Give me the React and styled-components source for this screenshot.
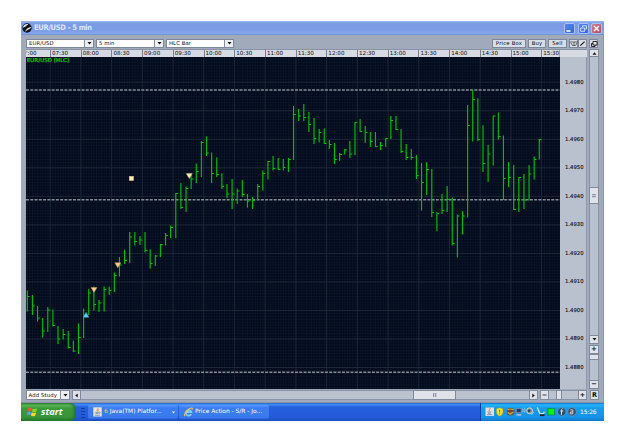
import React from "react";
import styled, { createGlobalStyle } from "styled-components";

const FIRST_BAR_X = 27.3;
const BAR_STEP = 5.12;

// [high, low, close] for each 5 minute bar, in chart units
const BARS = [
  [290.5, 311.5, 296.5], [295, 315, 306], [306, 321.5, 318], [318, 337.5, 331],
  [307, 332, 310], [309.5, 326.5, 325.5], [326, 344, 339], [329, 339.5, 334.5],
  [331, 348.5, 347.5], [340.5, 352, 351], [323.5, 354, 337.5], [308.5, 338, 315],
  [289, 315, 293], [286.5, 310.5, 304.5], [300, 312, 303], [286.5, 311.5, 289.5],
  [286.5, 295, 290.5], [272.5, 292, 275.5], [257, 276.5, 265], [249.5, 264, 260.5],
  [232, 263, 237], [232, 245.5, 241.5], [236, 245, 240], [232, 252.5, 250.5],
  [249.5, 268.5, 263.5], [255, 266, 256], [244, 257, 244.5], [233, 245.5, 235.5],
  [225.5, 238, 227.5], [193, 238, 193.5], [183, 209, 207.5], [186.5, 212, 188.5],
  [175, 189, 179], [163.5, 183, 171.5], [141, 177, 142.5], [136.5, 156, 153],
  [152.5, 183, 173.5], [157.5, 177, 174.5], [173.5, 189, 186.5], [184, 198, 194],
  [179, 209, 194], [188.5, 204, 191], [180, 197, 194.5], [194, 207.5, 201],
  [197, 209, 200.5], [184, 200, 186.5], [170.5, 190.5, 173.5], [161, 179.5, 161.5],
  [156, 170.5, 168.5], [158, 170, 169.5], [159, 170.5, 167.5], [158, 172, 159.5],
  [106, 160, 114.5], [109, 121, 116], [104, 121, 117.5], [112, 132, 124.5],
  [118, 144, 138.5], [129, 142.5, 132.5], [128.5, 144, 143.5], [140, 149, 144.5],
  [143, 164, 159.5], [153, 161, 154.5], [149, 154.5, 150], [141, 158, 154],
  [122, 155, 122.5], [119, 132, 131.5], [126, 143, 132.5], [132, 147, 141.5],
  [132, 147, 146.5], [142, 150, 145.5], [138, 147, 138.5], [116, 139, 120.5],
  [116, 130, 129.5], [129, 153, 151.5], [144, 160, 157.5], [149, 160, 157.5],
  [155, 179, 175.5], [163, 210.5, 182.5], [162, 195, 169.5], [169, 217, 212.5],
  [212, 231, 213.5], [194, 214, 210.5], [186, 212, 199.5], [197.5, 245.5, 243.5],
  [214.5, 257.5, 216], [211, 234.5, 216], [105, 217.5, 125.5], [90, 141.5, 99.5],
  [98.5, 141, 139.5], [125.5, 172, 163.5], [145, 182, 154], [115.5, 165.5, 116],
  [112.5, 139.5, 136.5], [135.5, 200, 178.5], [162, 187, 177.5], [165, 210, 209.5],
  [177, 212, 177.5], [174, 209, 200], [165, 200.5, 174], [156.5, 179.5, 159.5],
  [139, 159.5, 139.5],
];

const TIMES = [
  "07:30", "08:00", "08:30", "09:00", "09:30", "10:00", "10:30", "11:00", "11:30",
  "12:00", "12:30", "13:00", "13:30", "14:00", "14:30", "15:00", "15:30",
];

const PRICES = [
  "1.4980", "1.4970", "1.4960", "1.4950", "1.4940", "1.4930",
  "1.4920", "1.4910", "1.4900", "1.4890", "1.4880",
];

const LEVELS = [90, 199.8, 372.3];

const Chart = () => (
  <ChartSvg viewBox="26 57 534 332">
    <defs>
      <pattern id="minor" x="50" y="82" width="2.56" height="2.853" patternUnits="userSpaceOnUse">
        <path d="M0 0.5H2.56M0.5 0V2.853" stroke="#0a1628" strokeWidth="0.8" />
      </pattern>
    </defs>
    <rect x="26" y="57" width="534" height="332" fill="#010819" />
    <rect x="26" y="57" width="534" height="332" fill="url(#minor)" />
    {TIMES.map((time, i) => (
      <line key={time} x1={50.2 + i * 30.71} x2={50.2 + i * 30.71} y1="57" y2="389" stroke="#1c2737" />
    ))}
    {PRICES.map((price, i) => (
      <line key={price} x1="26" x2="560" y1={82.2 + i * 28.53} y2={82.2 + i * 28.53} stroke="#1c2737" />
    ))}
    {LEVELS.map((y) => (
      <line key={y} x1="26" x2="560" y1={y} y2={y} stroke="#868c95" strokeWidth="1.5" strokeDasharray="3 1.27" />
    ))}
    {BARS.map(([high, low, close], i) => {
      const x = FIRST_BAR_X + i * BAR_STEP;
      return (
        <path
          key={i}
          d={`M${x} ${high}V${low}M${x} ${close}h2.3`}
          stroke="#00c008"
          strokeWidth="1.15"
          fill="none"
        />
      );
    })}
    <path d="M91 287.6h6l-3 5z" fill="#ffd08a" stroke="#c88f60" strokeWidth="0.5" />
    <path d="M114.8 262.8h6l-3 5z" fill="#ffd08a" stroke="#c88f60" strokeWidth="0.5" />
    <path d="M186.3 173.6h6l-3 5z" fill="#fff0a8" stroke="#c8b890" strokeWidth="0.5" />
    <path d="M83.4 317.3h5.4l-2.7-5z" fill="#62d0ff" stroke="#4a9ac0" strokeWidth="0.5" />
    <rect x="129.3" y="176.4" width="4.2" height="4" fill="#ffefa8" stroke="#d8cda0" strokeWidth="0.6" />
    <ChartLabel x="26.8" y="61.6" textLength="42.5">
      EUR/USD (HLC)
    </ChartLabel>
  </ChartSvg>
);

const Arrow = ({ d = "M0.5 1h4L2.5 3.5z" }) => (
  <svg width="5" height="5" viewBox="0 0 5 5">
    <path d={d} fill="#111" />
  </svg>
);

const UP = "M0.5 3.7h4L2.5 1.2z";
const LEFT = "M3.7 0.5v4L1.2 2.5z";
const RIGHT = "M1.3 0.5v4L3.8 2.5z";

const Dropdown = ({ width, children }) => (
  <Select $width={width}>
    <SelectValue>{children}</SelectValue>
    <SelectArrow>
      <Arrow />
    </SelectArrow>
  </Select>
);

const JavaIcon = () => (
  <svg width="9" height="10" viewBox="0 0 9 10">
    <rect x="0.3" y="0.3" width="8.4" height="9.2" fill="#e9e4df" />
    <path d="M4.7 1.2c1 1-1.6 1.7-.3 3.2M5.7 2.6c-.9.6-.9 1 0 1.8" stroke="#e26a32" strokeWidth="0.8" fill="none" />
    <path d="M2.2 5.3h3.7M2.6 6.5h3M1.7 7.9c1.5.8 4 .7 5.3 0M6.4 5.2c1.2-.2 1 1.1-.3 1.4" stroke="#5378a5" strokeWidth="0.7" fill="none" />
  </svg>
);

const IeIcon = () => (
  <svg width="9" height="10" viewBox="0 0 9 10">
    <path d="M7.2 7.1A2.8 2.8 0 1 1 7.4 5.2H2.4" fill="none" stroke="#7cd2ff" strokeWidth="1.7" />
    <path d="M1.2 9C-.6 8.5 1.6 4 5 2c2.5-1.5 4-1.2 3.2.6" fill="none" stroke="#f4c83a" strokeWidth="1.1" />
  </svg>
);

const TrayIcons = () => (
  <svg width="92" height="12" viewBox="0 0 92 12">
    {/* java */}
    <rect x="0.5" y="1.5" width="8.5" height="8.5" fill="#e4e1dd" />
    <path d="M4.9 2c1 1-1.6 1.7-.3 3.2" stroke="#e26a32" strokeWidth="0.9" fill="none" />
    <path d="M2.5 6h3.8M3 7.2h2.7M2 8.7h5.3" stroke="#5378a5" strokeWidth="0.7" />
    {/* security shield */}
    <path d="M14.7 1.7l3.3 1v3.2c0 2-1.3 3.3-3.3 4.3-2-1-3.3-2.3-3.3-4.3V2.7z" fill="#f8e22e" stroke="#9b8c22" strokeWidth="0.5" />
    <path d="M14.7 3.8v2.7M14.7 7.3v1" stroke="#6d6420" strokeWidth="0.9" />
    {/* globe */}
    <circle cx="25.6" cy="5.8" r="3.8" fill="#6d4a2b" />
    <path d="M22.5 4c2-2 4.5-.8 6.2 0M22.6 6.6c2 1.4 4 .9 6-.6" stroke="#e6a137" strokeWidth="1.2" fill="none" />
    <path d="M24 8.5l3 .4" stroke="#57a05b" />
    {/* network monitor */}
    <rect x="31.3" y="2.7" width="4.8" height="4" fill="#263866" stroke="#8290b2" strokeWidth="0.7" />
    <path d="M31.5 8.9h4.7" stroke="#c4ccdc" strokeWidth="1.3" />
    <path d="M37.5 2.5q1.3 1.7 0 3.7M39.3 1.7q1.8 2.5 0 5" stroke="#c9dcf2" strokeWidth="0.7" fill="none" />
    {/* volume */}
    <circle cx="44.6" cy="4.8" r="3" fill="#87919b" stroke="#d1d6dd" strokeWidth="0.9" />
    <circle cx="44.2" cy="4.8" r="1.4" fill="#343e4f" />
    <path d="M46.5 8.9l2.2-3" stroke="#b3cae7" strokeWidth="0.9" />
    {/* plug */}
    <path d="M52.2 1.6l2.5 5.5c1.2 1.3 3 .6 4.5.2" stroke="#e4e5d8" strokeWidth="1.3" fill="none" />
    <path d="M55 9.2h4.5" stroke="#1d1d20" strokeWidth="1.8" />
    <path d="M58 6.2h2.5" stroke="#d8cd4a" />
    {/* activity light */}
    <rect x="63" y="2.3" width="6.3" height="6.7" fill="#00f60c" stroke="#087d4b" strokeWidth="0.7" />
    <circle cx="76.7" cy="5.8" r="4.2" fill="#274f75" stroke="#74a4c9" strokeWidth="0.6" />
    <path d="M77.5 2.7c-1 0-1.2 1.3-.8 2.2L76.3 8.9M75.3 5h3" stroke="#dce9f4" fill="none" />
    <circle cx="87" cy="5.8" r="4.2" fill="#3c5167" stroke="#74a4c9" strokeWidth="0.6" />
    <path d="M85.3 3.9h2.5v4h-2.5v-1.9h2.5" stroke="#d2dce6" strokeWidth="0.9" fill="none" />
  </svg>
);

const App = () => (
  <>
    <GlobalStyle />
    <Page>
      <Screen>
        <TitleBar>
          <svg width="10" height="10" viewBox="0 0 10 10">
            <circle cx="5" cy="5" r="4.7" fill="#10141c" />
            <path d="M.7 4.6C2 1.6 4 .8 6.2 1.2 4.5 2.3 3 4.3.7 4.6zM2.7 8.9c1.4-2.9 3.7-4.7 6.7-4.9C8.5 5.8 6 6.3 2.7 8.9z" fill="#f2f6fb" />
          </svg>
          <Title>EUR/USD - 5 min</Title>
          <WindowButton>
            <svg width="11" height="11" viewBox="0 0 11 11">
              <path d="M2.5 8h4" stroke="#fff" strokeWidth="1.6" />
            </svg>
          </WindowButton>
          <WindowButton>
            <svg width="11" height="11" viewBox="0 0 11 11">
              <path d="M4.5 4V2.8H8.5V6H7.3M2.7 5H6.7V8.3H2.7z" stroke="#dfe9ff" strokeWidth="0.9" fill="none" />
            </svg>
          </WindowButton>
          <WindowButton $close>
            <svg width="11" height="11" viewBox="0 0 11 11">
              <path d="M3 3l5 5M8 3l-5 5" stroke="#fff" strokeWidth="1.4" />
            </svg>
          </WindowButton>
        </TitleBar>
        <Frame>
          <Toolbar>
            <Dropdown width={68}>EUR/USD</Dropdown>
            <Dropdown width={68}>5 min</Dropdown>
            <Dropdown width={68}>HLC Bar</Dropdown>
            <Spacer />
            <ToolButton $width={34}>Price Box</ToolButton>
            <ToolButton $width={18}>Buy</ToolButton>
            <ToolButton $width={19}>Sell</ToolButton>
            <ToolPair>
              <ToolButton $width={9}>
                <svg width="8" height="7" viewBox="0 0 8 7">
                  <path d="M1 1v2l1.5 2.5h3L7 3V1M3 1v2h2V1M3 5h2" stroke="#55585f" strokeWidth="0.9" fill="none" />
                </svg>
              </ToolButton>
              <ToolButton $width={9}>
                <svg width="7" height="7" viewBox="0 0 7 7">
                  <path d="M1.3 5.6l4.3-4" stroke="#111" strokeWidth="1.1" />
                </svg>
              </ToolButton>
            </ToolPair>
            <ToolButton $width={9}>
              <svg width="8" height="8" viewBox="0 0 8 8">
                <path d="M3 1.5h4v3.5H3z" stroke="#111" strokeWidth="0.9" fill="#e8eaee" />
                <path d="M3 3.500H1.500V6.500H5V5" stroke="#111" strokeWidth="0.9" fill="none" />
              </svg>
            </ToolButton>
          </Toolbar>
          <Workspace>
            <ChartColumn>
              <TimeAxis>
                <FirstTick>':00</FirstTick>
                {TIMES.map((time) => (
                  <Tick key={time}>{time}</Tick>
                ))}
              </TimeAxis>
              <ChartRow>
                <Chart />
                <PriceAxis>
                  {PRICES.map((price) => (
                    <Price key={price}>{price}</Price>
                  ))}
                </PriceAxis>
              </ChartRow>
            </ChartColumn>
            <SideBar>
              <ScrollButton $height={8}>
                <Arrow d={UP} />
              </ScrollButton>
              <Track $height={130} />
              <ScrollButton $height={17}>
                <Grip />
              </ScrollButton>
              <Track $height={131} />
              <ScrollButton $height={9}>
                <Arrow />
              </ScrollButton>
              <SideGap />
              <ScrollButton $height={9}>+</ScrollButton>
              <ScrollButton $height={6} />
              <Track $height={20} />
              <ScrollButton $height={8}>−</ScrollButton>
            </SideBar>
          </Workspace>
          <BottomBar>
            <Study>
              <StudyName>Add Study</StudyName>
              <SelectArrow>
                <Arrow />
              </SelectArrow>
            </Study>
            <BarButton $width={9}>
              <Arrow d={LEFT} />
            </BarButton>
            <Rail $width={332} />
            <BarButton $width={43}>
              <Grip $vertical />
            </BarButton>
            <Rail $width={73} />
            <BarButton $width={9}>
              <Arrow d={RIGHT} />
            </BarButton>
            <BarButton $width={9} $gap={2}>−</BarButton>
            <Rail $width={7} />
            <BarButton $width={6} />
            <Rail $width={16} />
            <BarButton $width={9}>+</BarButton>
            <BarButton $width={9} $gap={3}>R</BarButton>
          </BottomBar>
        </Frame>
        <TaskBar>
          <Start>
            <svg width="11" height="11" viewBox="0 0 11 11">
              <path d="M1.3 1.9c1.5-.8 2.6-.6 3.7.1L4.2 5.2C3 4.5 2 4.5.6 5.1z" fill="#ef5a2c" />
              <path d="M5.7 2.4c1.4.7 2.7.7 4.5-.1L9.3 5.6c-1.5.8-2.9.7-4.3-.1z" fill="#8fd12f" />
              <path d="M.5 5.9c1.4-.6 2.4-.5 3.5.1L3.2 9.2C2 8.5 1 8.6-.2 9.1z" fill="#5d9bf5" />
              <path d="M4.7 6.3c1.4.7 2.8.8 4.4.1L8.2 9.7c-1.5.8-2.9.6-4.3-.1z" fill="#ffd52e" />
            </svg>
            start
          </Start>
          <QuickGrip />
          <Task>
            <JavaIcon />
            <Count>6</Count>
            <TaskName>Java(TM) Platfor...</TaskName>
            <svg width="5" height="5" viewBox="0 0 5 5">
              <path d="M0.8 1.5h3.4L2.5 3.5z" fill="#fff" />
            </svg>
          </Task>
          <Task>
            <IeIcon />
            <TaskName>Price Action - S/R - Jo...</TaskName>
          </Task>
          <Spacer />
          <Tray>
            <TrayIcons />
            <Clock>15:26</Clock>
          </Tray>
        </TaskBar>
      </Screen>
    </Page>
  </>
);

const GlobalStyle = createGlobalStyle`
  * {
    box-sizing: border-box;
  }
  body {
    margin: 0;
    background: #fff;
    overflow: hidden;
    font-family: "DejaVu Sans", Verdana, sans-serif;
    font-size: 5.3px;
    line-height: 1;
    color: #0b0c0f;
  }
  svg {
    display: block;
    flex-shrink: 0;
  }
`;

const Page = styled.div`
  width: 625px;
  height: 442px;
  padding: 21px;
`;

const Screen = styled.div`
  display: flex;
  flex-direction: column;
  width: 583px;
  height: 400px;
`;

const TitleBar = styled.div`
  display: flex;
  align-items: center;
  gap: 2px;
  height: 14px;
  padding: 0 2px 0 1px;
  background: linear-gradient(#9dbdf5 0%, #7b9be4 15%, #7c9ce5 60%, #82a6ee 90%, #6c8bc5 100%);
`;

const Title = styled.div`
  flex: 1;
  color: #dce7ff;
  font-family: "DejaVu Sans Condensed", "DejaVu Sans", sans-serif;
  font-size: 7.5px;
  font-weight: bold;
  font-stretch: condensed;
  letter-spacing: -0.3px;
`;

const WindowButton = styled.div`
  width: 11px;
  height: 11px;
  border: 0.5px solid #a9c0f4;
  border-radius: 2px;
  margin-left: 0.5px;
  background: ${({ $close }) =>
    $close ? "linear-gradient(135deg, #c98494, #b9485a)" : "linear-gradient(135deg, #5487ee, #3865da)"};

  svg {
    margin: -1px;
  }
`;

const Frame = styled.div`
  display: flex;
  flex-direction: column;
  height: 368px;
  padding: 4px 5px 0;
  background: #a1aaba;
  border-right: 1px solid #8795ae;
  border-bottom: 1px solid #8a93a5;
`;

const Toolbar = styled.div`
  display: flex;
  gap: 2px;
  height: 9px;
  margin-bottom: 1px;
`;

const Spacer = styled.div`
  flex: 1;
`;

const Select = styled.div`
  display: flex;
  width: ${({ $width }) => $width}px;
  border: 1px solid #7d8799;
  background: #fdfdfd;
`;

const SelectValue = styled.div`
  flex: 1;
  padding: 1px 0 0 2px;
  letter-spacing: 0.1px;
  white-space: nowrap;
`;

const SelectArrow = styled.div`
  display: flex;
  align-items: center;
  justify-content: center;
  width: 9px;
  border-left: 1px solid #858e9f;
  background: #eceef2;
`;

const ToolButton = styled.div`
  display: flex;
  align-items: center;
  justify-content: center;
  width: ${({ $width }) => $width}px;
  height: 9px;
  border: 0.5px solid #7d8799;
  background: #d9dde4;
  letter-spacing: 0.2px;
  white-space: nowrap;
`;

const ToolPair = styled.div`
  display: flex;
`;

const Workspace = styled.div`
  display: flex;
  height: 340px;
`;

const ChartColumn = styled.div`
  width: 561px;
`;

const TimeAxis = styled.div`
  display: flex;
  height: 8px;
  overflow: hidden;
  border-top: 1px solid #8992a3;
  background: #d6dae2;
  font-size: 5.6px;
`;

const FirstTick = styled.div`
  flex: 0 0 24px;
  padding-top: 1px;
`;

const Tick = styled.div`
  flex: 0 0 30.71px;
  padding: 1px 0 0 1px;
  border-left: 1px solid #77808f;

  &:last-child {
    flex-basis: 18.5px;
    border-right: 1px solid #9aa2b0;
    white-space: nowrap;
    letter-spacing: -0.1px;
  }
`;

const ChartRow = styled.div`
  display: flex;
`;

const ChartSvg = styled.svg`
  width: 534px;
  height: 332px;
`;

const ChartLabel = styled.text`
  fill: #00e000;
  stroke: #00e000;
  stroke-width: 0.15px;
  font-size: 5.4px;
`;

const PriceAxis = styled.div`
  display: flex;
  flex-direction: column;
  width: 27px;
  padding-top: 11px;
  background: #b9c0ce;
  border-right: 1px solid #9099aa;
`;

const Price = styled.div`
  display: flex;
  align-items: center;
  flex: 0 0 28.53px;
  padding-left: 5px;
  -webkit-text-stroke: 0.1px #0b0c0f;
`;

const SideBar = styled.div`
  display: flex;
  flex-direction: column;
  width: 11px;
  margin-left: 2px;
`;

const ScrollButton = styled.div`
  display: flex;
  align-items: center;
  justify-content: center;
  flex: 0 0 ${({ $height }) => $height}px;
  width: 10px;
  border: 0.5px solid #808a9d;
  background: #e0e3e9;
  font-size: 7px;
  font-weight: bold;
`;

const Track = styled.div`
  flex: 0 0 ${({ $height }) => $height}px;
  width: 10px;
  border: solid #8993a6;
  border-width: 0 1px;
  background: #b9c0ce;
`;

const SideGap = styled.div`
  height: 2px;
`;

const Grip = styled.div`
  width: 4px;
  height: 4px;
  background: repeating-linear-gradient(
    ${({ $vertical }) => ($vertical ? "90deg" : "180deg")},
    #9299a7 0 1px,
    #c6cbd4 1px 2px
  );
`;

const BottomBar = styled.div`
  display: flex;
  height: 10px;
  margin-top: 1px;
  width: 574px;
`;

const Study = styled.div`
  display: flex;
  width: 44px;
  margin-right: 2px;
  border: 0.5px solid #7d8799;
  background: #fdfdfd;
`;

const StudyName = styled.div`
  flex: 1;
  padding: 1.5px 0 0 1.5px;
  letter-spacing: 0.15px;
  white-space: nowrap;
`;

const BarButton = styled.div`
  display: flex;
  align-items: center;
  justify-content: center;
  flex: 0 0 ${({ $width }) => $width}px;
  margin-left: ${({ $gap = 0 }) => $gap}px;
  border: 0.5px solid #808a9d;
  background: #dfe2e8;
  font-size: 6.5px;
  font-weight: bold;
`;

const Rail = styled.div`
  flex: 0 0 ${({ $width }) => $width}px;
  border: solid #8993a6;
  border-width: 1px 0;
  background: #bbc2cf;
`;

const TaskBar = styled.div`
  display: flex;
  height: 18px;
  background: linear-gradient(#2b63c9 0%, #3f8df5 9%, #2560dc 22%, #235ad9 80%, #1e4ebd 100%);
`;

const Start = styled.div`
  display: flex;
  align-items: center;
  gap: 3px;
  width: 55px;
  padding: 0 0 1px 6px;
  border-radius: 0 6px 6px 0;
  background: linear-gradient(#318a31 0%, #5bb759 12%, #3a993b 30%, #379639 75%, #287b2b 100%);
  box-shadow: inset -2px 0 3px #246f31;
  color: #fff;
  font-family: "Open Sans", sans-serif;
  font-size: 9.3px;
  font-style: italic;
  font-weight: bold;
`;

const QuickGrip = styled.div`
  width: 4px;
  height: 11px;
  margin: 4px 3px 0 5px;
  background: radial-gradient(circle, #153e9c 0.7px, transparent 0.9px) 0 0 / 2px 3px;
`;

const Task = styled.div`
  display: flex;
  align-items: center;
  width: 90px;
  height: 14px;
  margin: 2px 1px 0 0;
  padding: 0 2px 0 5px;
  border-radius: 2px;
  background: linear-gradient(#5a9bfb, #3b7df0 20%, #3a7bee 80%, #2f6ae0);
  color: #fff;
  font-size: 5.9px;
`;

const Count = styled.div`
  margin-left: 2px;
  color: #ffc071;
`;

const TaskName = styled.div`
  flex: 1;
  margin-left: 2px;
  white-space: nowrap;
`;

const Tray = styled.div`
  display: flex;
  align-items: center;
  gap: 3px;
  width: 124px;
  padding-left: 4px;
  border-left: 1px solid #123f9f;
  background: linear-gradient(#0e6fcf 0%, #28b5fa 10%, #159ceb 28%, #1593e8 80%, #0f76c8 100%);
  color: #fff;
`;

const Clock = styled.div`
  font-size: 6px;
  letter-spacing: -0.15px;
`;

export default App;
